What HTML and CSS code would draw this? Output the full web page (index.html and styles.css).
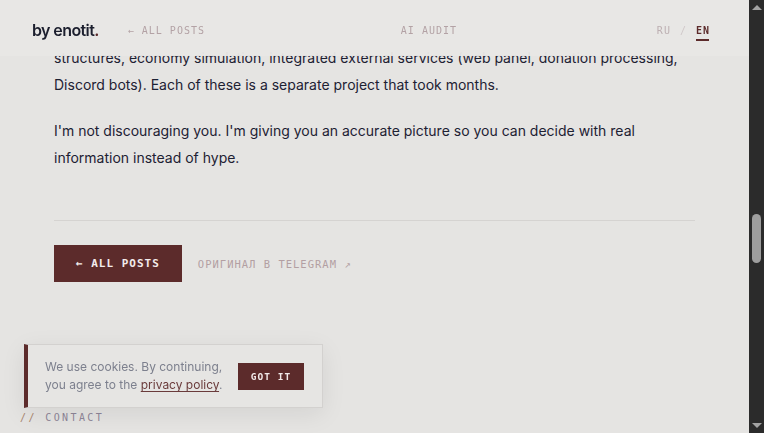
FILE: index.html
```html
<!DOCTYPE html>
<html lang="en">
<head>
<meta charset="utf-8">
<title>by enotit.</title>
<link rel="stylesheet" href="styles.css">
</head>
<body>
<div class="page">
  <header class="topbar">
    <div class="brand-group">
      <a class="logo" href="#">by enotit<span class="dot">.</span></a>
      <a class="nav-link" href="#">← ALL POSTS</a>
    </div>
    <a class="nav-link center-link" href="#">AI AUDIT</a>
    <div class="lang">
      <span class="lang-item">RU</span>
      <span class="lang-sep">/</span>
      <span class="lang-item active">EN</span>
    </div>
  </header>

  <main class="article">
    <p>structures, economy simulation, integrated external services (web panel, donation processing, Discord bots). Each of these is a separate project that took months.</p>
    <p>I'm not discouraging you. I'm giving you an accurate picture so you can decide with real information instead of hype.</p>
    <hr class="divider">
    <div class="actions">
      <a class="btn" href="#">← ALL POSTS</a>
      <a class="tg-link" href="#">ОРИГИНАЛ В TELEGRAM ↗</a>
    </div>
  </main>

  <footer class="footer">
    <h3 class="footer-title"><span class="slashes">//</span> CONTACT</h3>
  </footer>

  <div class="cookie">
    <p class="cookie-text">We use cookies. By continuing, you agree to the <a href="#">privacy policy</a>.</p>
    <button class="cookie-btn">GOT IT</button>
  </div>
</div>
<div class="scrollbar">
  <div class="sb-arrow up"></div>
  <div class="sb-track"><div class="sb-thumb"></div></div>
  <div class="sb-arrow down"></div>
</div>
</body>
</html>
```

FILE: styles.css
```css
* { box-sizing: border-box; }
html, body { margin: 0; padding: 0; height: 100%; }
body {
  display: flex;
  background: #e5e4e2;
  overflow: hidden;
  font-family: "Inter", sans-serif;
  color: #1c1f2e;
}
a { text-decoration: none; color: inherit; }

.page {
  flex: 1;
  height: 433px;
  overflow: hidden;
  position: relative;
}

.topbar {
  position: fixed;
  top: 0;
  left: 0;
  right: 15px;
  height: 56px;
  display: flex;
  align-items: center;
  padding: 4px 39px 0 32px;
  background: rgba(232, 231, 229, 0.96);
  z-index: 5;
}
.brand-group { display: flex; align-items: center; gap: 29px; }
.logo {
  font-family: "Inter", sans-serif;
  font-weight: 600;
  font-size: 16px;
  letter-spacing: -0.6px;
  color: #1c1f2e;
}
.logo .dot { color: #5c2b2b; }
.nav-link {
  font-family: "DejaVu Sans Mono", monospace;
  font-size: 10px;
  letter-spacing: 1px;
  color: #b3a2a5;
}
.center-link { margin-left: auto; margin-right: 4px; }
.lang {
  margin-left: auto;
  display: flex;
  gap: 9px;
  font-family: "DejaVu Sans Mono", monospace;
  font-size: 10px;
  letter-spacing: 1px;
  color: #bcafb1;
}
.lang-sep { color: #d0c8c9; }
.lang-item.active {
  color: #5c2b2b;
  font-weight: bold;
  position: relative;
}
.lang-item.active::after {
  content: "";
  position: absolute;
  left: 0;
  right: 1px;
  bottom: -5px;
  height: 1.5px;
  background: #5c2b2b;
}

.article {
  width: 641px;
  margin: 0 auto;
  padding-top: 44px;
}
.article p {
  margin: 0 0 19px;
  font-family: "Inter", sans-serif;
  font-size: 14px;
  line-height: 27px;
  color: #1d2133;
}

.divider {
  border: 0;
  border-top: 1px solid #d5d3d1;
  margin: 49px 0 24px;
}
.actions { display: flex; align-items: center; gap: 16px; }
.btn {
  display: flex;
  align-items: center;
  height: 37px;
  padding: 0 22px;
  background: #5c2b2b;
  color: #f3ecec;
  font-family: "DejaVu Sans Mono", monospace;
  font-weight: bold;
  font-size: 11px;
  letter-spacing: 1px;
}
.tg-link {
  font-family: "DejaVu Sans Mono", monospace;
  font-size: 10.5px;
  letter-spacing: 1px;
  color: #b39fa2;
}

.footer { padding: 130px 20px 0; }
.footer-title {
  margin: 0;
  font-family: "DejaVu Sans Mono", monospace;
  font-weight: normal;
  font-size: 10px;
  letter-spacing: 2.4px;
  color: #8e8698;
}
.slashes { color: #a9866f; }

.cookie {
  position: fixed;
  left: 24px;
  bottom: 25px;
  width: 299px;
  height: 64px;
  display: flex;
  align-items: center;
  gap: 12px;
  padding: 0 18px 0 17px;
  background: #e6e5e3;
  border: 1px solid #d3d1cf;
  border-left: 4px solid #5c2b2b;
  box-shadow: 0 6px 24px rgba(0, 0, 0, 0.08);
  z-index: 6;
}
.cookie-text {
  margin: 0;
  flex: 1;
  font-family: "Inter", sans-serif;
  font-size: 12px;
  line-height: 18px;
  color: #7d808e;
}
.cookie-text a {
  color: #6a3b3b;
  text-decoration: underline;
  text-underline-offset: 2px;
}
.cookie-btn {
  border: 0;
  background: #5c2b2b;
  color: #f1e9e9;
  width: 66px;
  height: 27px;
  padding: 0;
  font-family: "DejaVu Sans Mono", monospace;
  font-weight: bold;
  font-size: 9.5px;
  letter-spacing: 1px;
}

.scrollbar {
  width: 15px;
  height: 433px;
  background: #2b2b2b;
  display: flex;
  flex-direction: column;
  align-items: center;
}
.sb-arrow {
  width: 0;
  height: 0;
  border-left: 5px solid transparent;
  border-right: 5px solid transparent;
}
.sb-arrow.up { border-bottom: 5px solid #a3a3a3; margin: 5px 0; }
.sb-arrow.down { border-top: 5px solid #a3a3a3; margin: 5px 0; }
.sb-track { flex: 1; width: 100%; display: flex; justify-content: center; }
.sb-thumb {
  width: 9px;
  height: 49px;
  margin-top: 199px;
  border-radius: 5px;
  background: #9e9e9e;
}
```
